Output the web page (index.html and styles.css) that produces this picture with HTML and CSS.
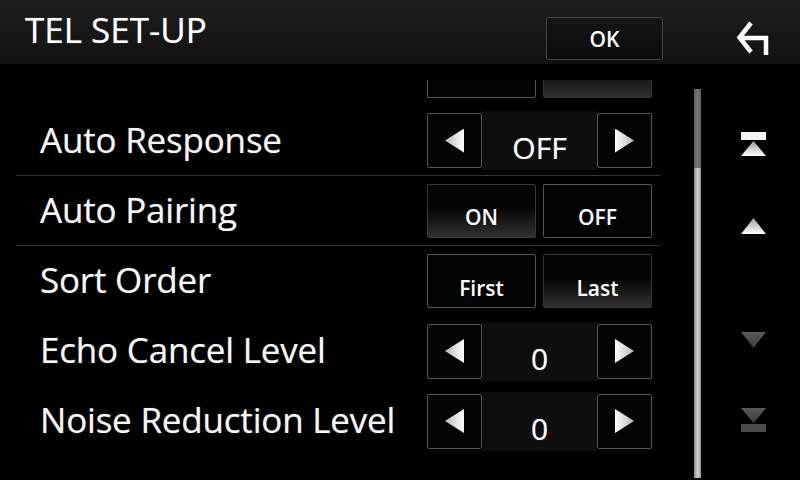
FILE: index.html
```html
<!DOCTYPE html>
<html lang="en-US">
  <head>
    <meta charset="utf-8">
    <meta name="viewport" content="width=device-width">
    <title>TEL SET-UP</title>
    <link rel="stylesheet" href="styles.css">
  </head>

  <body>
    <div class="screen">

      <div class="header">
        <div class="title">TEL SET-UP</div>
        <div class="ok-btn">OK</div>
        <div class="back">
          <svg width="94" height="64" viewBox="0 0 94 64">
            <polyline points="45,23 33.5,37.5 45,52" fill="none" stroke="#fff" stroke-width="4.5"/>
            <polyline points="34,38 60,38 60,55" fill="none" stroke="#fff" stroke-width="4.5"/>
          </svg>
        </div>
      </div>

      <div class="main">
        <div class="list">
          <div class="rows">

            <div class="row">
              <div class="label"></div>
              <div class="toggle">
                <div class="tbtn"></div>
                <div class="tbtn on"></div>
              </div>
            </div>

            <div class="row sep">
              <div class="label">Auto Response</div>
              <div class="spin">
                <div class="arrow"><span class="tri-left"></span></div>
                <div class="val">OFF</div>
                <div class="arrow"><span class="tri-right"></span></div>
              </div>
            </div>

            <div class="row sep">
              <div class="label">Auto Pairing</div>
              <div class="toggle">
                <div class="tbtn on">ON</div>
                <div class="tbtn">OFF</div>
              </div>
            </div>

            <div class="row">
              <div class="label">Sort Order</div>
              <div class="toggle">
                <div class="tbtn">First</div>
                <div class="tbtn on">Last</div>
              </div>
            </div>

            <div class="row">
              <div class="label">Echo Cancel Level</div>
              <div class="spin">
                <div class="arrow"><span class="tri-left"></span></div>
                <div class="val">0</div>
                <div class="arrow"><span class="tri-right"></span></div>
              </div>
            </div>

            <div class="row">
              <div class="label">Noise Reduction Level</div>
              <div class="spin">
                <div class="arrow"><span class="tri-left"></span></div>
                <div class="val">0</div>
                <div class="arrow"><span class="tri-right"></span></div>
              </div>
            </div>

          </div>
        </div>

        <div class="scroll">
          <div class="thumb"></div>
          <div class="track"></div>
        </div>

        <div class="nav">
          <svg class="nav-top" width="25" height="24" viewBox="0 0 25 24">
            <defs>
              <linearGradient id="gw" x1="0" y1="0" x2="0" y2="1">
                <stop offset="0" stop-color="#9a9a9a"/>
                <stop offset="1" stop-color="#ffffff"/>
              </linearGradient>
            </defs>
            <rect x="0" y="0" width="25" height="8" fill="#f4f4f4"/>
            <polygon points="12.5,9 0,24 25,24" fill="url(#gw)"/>
          </svg>
          <svg class="nav-up" width="25" height="16" viewBox="0 0 25 16">
            <polygon points="12.5,0 0,16 25,16" fill="url(#gw)"/>
          </svg>
          <svg class="nav-down" width="25" height="16" viewBox="0 0 25 16">
            <defs>
              <linearGradient id="gg" x1="0" y1="0" x2="0" y2="1">
                <stop offset="0" stop-color="#5a5a5a"/>
                <stop offset="1" stop-color="#3c3c3c"/>
              </linearGradient>
            </defs>
            <polygon points="0,0 25,0 12.5,16" fill="url(#gg)"/>
          </svg>
          <svg class="nav-bottom" width="25" height="24" viewBox="0 0 25 24">
            <polygon points="0,0 25,0 12.5,15" fill="url(#gg)"/>
            <rect x="0" y="16" width="25" height="8" fill="#4a4a4a"/>
          </svg>
        </div>
      </div>

    </div>
  </body>
</html>
```

FILE: styles.css
```css
body {
  margin: 0;
  background: #000;
  font-family: "Open Sans", "DejaVu Sans", sans-serif;
  color: #fff;
}

.screen {
  width: 800px;
  height: 480px;
  overflow: hidden;
  background: #000;
}

/* header bar */
.header {
  height: 64px;
  display: flex;
  align-items: center;
  background: linear-gradient(#1e1e1e, #111);
}

.title {
  flex: 1;
  padding-left: 25px;
  margin-top: -5px;
  font-size: 35px;
  line-height: 1;
  text-shadow: 0 0 1px rgba(255, 255, 255, .5);
}

.ok-btn {
  width: 117px;
  height: 43px;
  box-sizing: border-box;
  margin-top: 13px;
  margin-right: 43px;
  border: 1px solid #444;
  border-radius: 2px;
  background: linear-gradient(#151515, #0b0b0b);
  display: flex;
  align-items: center;
  justify-content: center;
  font-size: 21px;
  font-weight: 600;
}

.back {
  width: 94px;
  height: 64px;
}

.back svg {
  display: block;
}

/* main area */
.main {
  display: flex;
  height: 416px;
}

.list {
  width: 680px;
  height: 400px;
  margin-top: 16px;
  overflow: hidden;
}

.rows {
  margin-top: -44px;
}

.row {
  display: flex;
  align-items: center;
  width: 644px;
  height: 70px;
  margin-left: 16px;
  padding: 0 8px 0 24px;
  box-sizing: border-box;
}

.row.sep {
  border-bottom: 1px solid #333;
}

.label {
  flex: 1;
  font-size: 35px;
  line-height: 1;
  margin-top: -3px;
  letter-spacing: -0.2px;
  color: #f6f6f6;
  text-shadow: 0 0 1px rgba(255, 255, 255, .5);
}

/* two choice buttons */
.toggle {
  display: flex;
  gap: 7px;
}

.tbtn {
  width: 109px;
  height: 54px;
  box-sizing: border-box;
  padding-top: 13px;
  border: 1px solid #555;
  border-radius: 2px;
  background: #030303;
  display: flex;
  align-items: center;
  justify-content: center;
  font-size: 21px;
  font-weight: 600;
}

.tbtn.on {
  border-color: #383838;
  background: linear-gradient(#050505 45%, #303030);
}

/* value spinner */
.spin {
  display: flex;
  align-items: center;
}

.arrow {
  width: 55px;
  height: 55px;
  box-sizing: border-box;
  border: 1px solid #555;
  border-radius: 2px;
  background: #050505;
  display: flex;
  align-items: center;
  justify-content: center;
}

.tri-left,
.tri-right {
  width: 19px;
  height: 24px;
  background: linear-gradient(to right, #b8b8b8, #fff);
}

.tri-left {
  clip-path: polygon(0 50%, 100% 0, 100% 100%);
}

.tri-right {
  background: linear-gradient(to left, #b8b8b8, #fff);
  clip-path: polygon(0 0, 100% 50%, 0 100%);
}

.val {
  width: 115px;
  height: 59px;
  box-sizing: border-box;
  padding-top: 14px;
  background: #0e0e0e;
  display: flex;
  align-items: center;
  justify-content: center;
  font-size: 30px;
  text-shadow: 0 0 1px rgba(255, 255, 255, .5);
}

/* scroll bar */
.scroll {
  width: 26px;
  padding: 25px 0 0 14px;
  box-sizing: border-box;
}

.thumb {
  width: 7px;
  height: 79px;
  background: linear-gradient(to right, #5e5e5e, #777, #5e5e5e);
}

.track {
  width: 7px;
  height: 310px;
  background: linear-gradient(to right, #8a8a8a, #d0d0d0, #9a9a9a);
}

/* page navigation */
.nav {
  width: 94px;
  display: flex;
  flex-direction: column;
  align-items: center;
  padding-top: 68px;
  box-sizing: border-box;
}

.nav svg {
  display: block;
}

.nav-up {
  margin-top: 62px;
}

.nav-down {
  margin-top: 98px;
}

.nav-bottom {
  margin-top: 60px;
}
```
